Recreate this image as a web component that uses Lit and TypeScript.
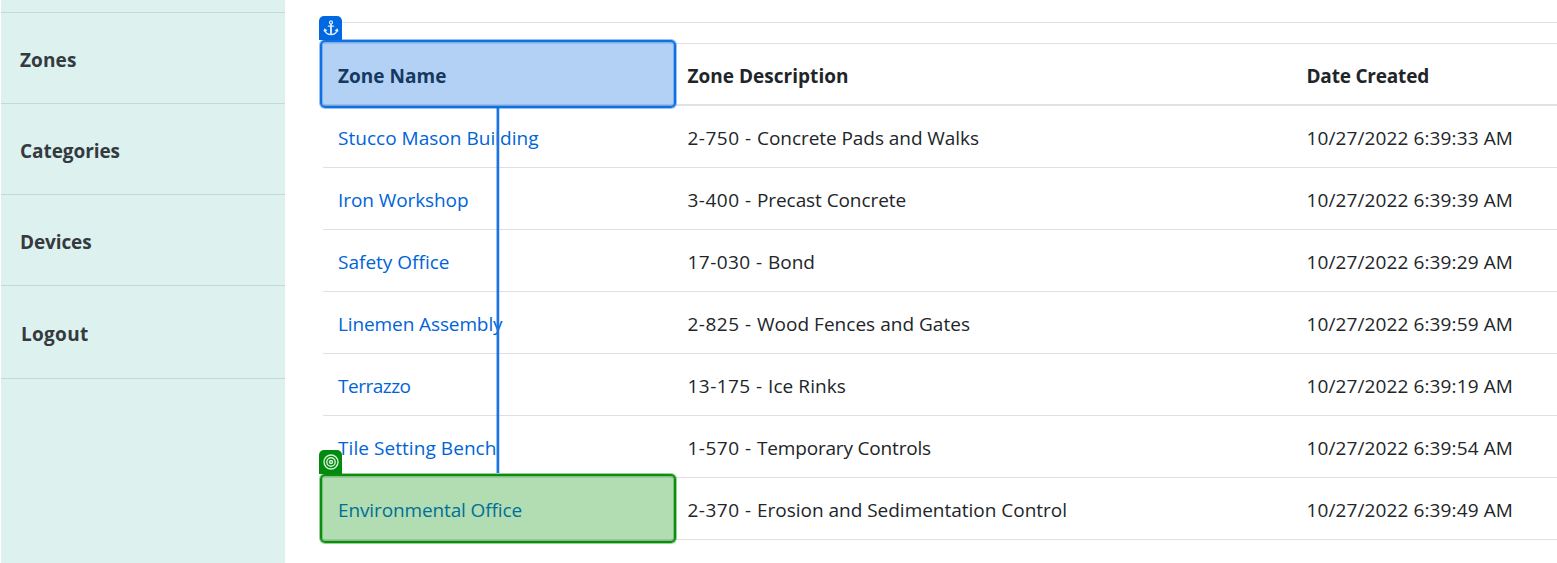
import { LitElement, html, css, svg } from "lit";
import { customElement } from "lit/decorators.js";

type Label = [text: string, width: number];

const NAV: Label[] = [["Zones", 56.5], ["Categories", 100], ["Devices", 71.5], ["Logout", 67.5]];
const HEAD: Label[] = [["Zone Name", 108.5], ["Zone Description", 161], ["Date Created", 122.5]];
const ROWS: Label[][] = [
  [["Stucco Mason Building", 200.5], ["2-750 - Concrete Pads and Walks", 291.5], ["10/27/2022 6:39:33 AM", 206.5]],
  [["Iron Workshop", 130.5], ["3-400 - Precast Concrete", 218.5], ["10/27/2022 6:39:39 AM", 206.5]],
  [["Safety Office", 111.5], ["17-030 - Bond", 127.5], ["10/27/2022 6:39:29 AM", 206.5]],
  [["Linemen Assembly", 164.5], ["2-825 - Wood Fences and Gates", 282.5], ["10/27/2022 6:39:59 AM", 206.5]],
  [["Terrazzo", 72.5], ["13-175 - Ice Rinks", 158.5], ["10/27/2022 6:39:19 AM", 206.5]],
  [["Tile Setting Bench", 158.5], ["1-570 - Temporary Controls", 243.5], ["10/27/2022 6:39:54 AM", 206.5]],
  [["Environmental Office", 184], ["2-370 - Erosion and Sedimentation Control", 379.5], ["10/27/2022 6:39:49 AM", 206.5]],
];

const anchor = svg`<g fill="none" stroke="#d9eaff" stroke-width="1.3" stroke-linecap="round">
  <circle cx="8" cy="2.4" r="1.5"/>
  <path d="M8 4.2V14.6M5.4 6.2H10.6M1.8 9.4C2.1 12.6 4.7 14.6 8 14.6S13.9 12.6 14.2 9.4M1.2 11L1.8 9.2L3.4 10.4M14.8 11L14.2 9.2L12.6 10.4"/>
  <path d="M8 5V14" stroke-width="1.8"/></g>`;
const target = svg`<g fill="none" stroke="#d5f0d5" stroke-width="1.4">
  <circle cx="8" cy="8" r="7"/><circle cx="8" cy="8" r="4.2"/><circle cx="8" cy="8" r="1.5"/></g>`;

@customElement("app-root")
export class AppRoot extends LitElement {
  static styles = css`
    :host { display: block; height: 563px; overflow: hidden; background: #fff;
      font-family: "Open Sans", "Noto Sans", sans-serif; font-size: 19px; color: #212529; }
    .page { display: flex; height: 563px; position: relative; }
    .side { width: 284px; margin-left: 1px; background: #ddf1ef; flex: none; }
    .item { box-sizing: border-box; height: 91px; padding: 4px 0 0 19px; border-bottom: 1px solid #c3d9d7;
      display: flex; align-items: center; font-weight: 700; color: #343a40; }
    .item.stub { height: 13px; padding: 0; }
    .item.last { height: 93px; padding-left: 20px; }
    .main { flex: 1; margin-left: 38px; padding-top: 22px; }
    .rule { height: 20px; border-top: 1px solid #e0e2e4; }
    .row { box-sizing: border-box; height: 62px; display: grid; grid-template-columns: 350px 619px 1fr;
      align-items: center; padding-top: 2px; border-bottom: 1px solid #dee0e3; }
    .row.head { height: 63px; padding-top: 3px; border-top: 1px solid #dee0e3; border-bottom: 2px solid #dee2e6; font-weight: 700; }
    .cell { padding-left: 15px; line-height: 26px; white-space: nowrap; }
    .cell.text { padding-left: 14.5px; }
    .link { color: #0064d8; }
    .fit { display: inline-block; white-space: pre; line-height: 26px; }
    .mark { position: absolute; box-sizing: border-box; left: 320px; width: 356px; height: 68px; border-radius: 5px; border: 2px solid; }
    .blue { top: 40px; border-color: #0d70e4; background: rgba(0, 103, 223, 0.3);
      box-shadow: 0 0 0 1px rgba(0, 103, 223, 0.4), inset 0 0 0 1px rgba(0, 103, 223, 0.3); }
    .green { top: 474px; height: 69px; border-color: #0b8e10; background: rgba(0, 140, 0, 0.3);
      box-shadow: 0 0 0 1px rgba(0, 140, 0, 0.4), inset 0 0 0 1px rgba(0, 140, 0, 0.3); }
    .badge { position: absolute; left: 319px; width: 23px; height: 24px; border-radius: 5px 5px 0 0;
      display: flex; align-items: center; justify-content: center; box-sizing: border-box; }
    .badge.b { top: 16px; background: #0068e1; }
    .badge.g { top: 450px; background: #008a0e; }
    .wire { position: absolute; left: 497px; top: 108px; width: 2px; height: 365px; background: #1a74e2;
      box-shadow: -1px 0 rgba(26, 116, 226, 0.45), 1px 0 rgba(26, 116, 226, 0.25); }
  `;

  firstUpdated() {
    this.renderRoot.querySelectorAll<HTMLElement>(".fit").forEach((el) => {
      const want = Number(el.dataset.width);
      const have = el.getBoundingClientRect().width;
      el.style.letterSpacing = `${(want - have) / (el.textContent ?? "").length}px`;
    });
  }

  label([text, width]: Label) {
    return html`<span class="fit" data-width=${width}>${text}</span>`;
  }

  description([text, width]: Label) {
    const cut = text.indexOf(" - ") + 3;
    const code = cut === 8 ? 69.5 : 80.5;
    return html`${this.label([text.slice(0, cut), code])}${this.label([text.slice(cut), width - code])}`;
  }

  render() {
    return html`<div class="page">
      <nav class="side">
        <div class="item stub"></div>
        ${NAV.map((n, i) => html`<div class="item ${i === 3 ? "last" : ""}">${this.label(n)}</div>`)}
      </nav>
      <main class="main">
        <div class="rule"></div>
        <div class="row head">${HEAD.map((h, i) => html`<div class="cell ${i ? "text" : ""}">${this.label(h)}</div>`)}</div>
        ${ROWS.map(([name, about, date]) => html`<div class="row">
          <div class="cell link">${this.label(name)}</div>
          <div class="cell text">${this.description(about)}</div>
          <div class="cell text">${this.label(date)}</div>
        </div>`)}
      </main>
      <div class="wire"></div>
      <div class="mark blue"></div>
      <div class="mark green"></div>
      <div class="badge b"><svg width="16" height="16" viewBox="0 0 16 16">${anchor}</svg></div>
      <div class="badge g"><svg width="16" height="16" viewBox="0 0 16 16">${target}</svg></div>
    </div>`;
  }
}
